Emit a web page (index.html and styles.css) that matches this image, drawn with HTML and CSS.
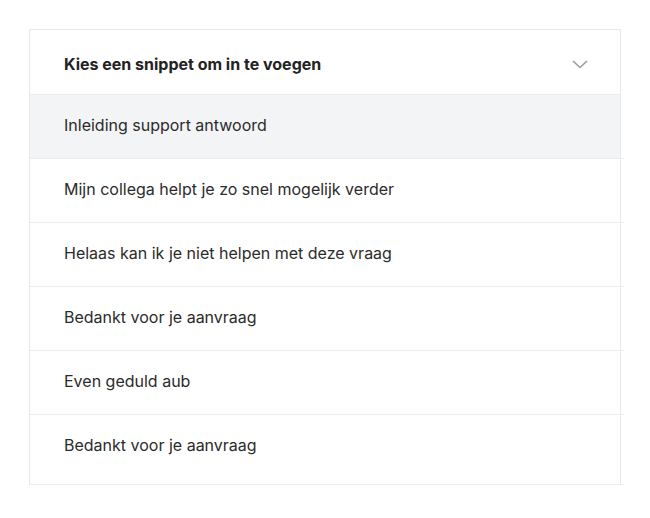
FILE: index.html
```html
<!DOCTYPE html>
<html>
<head>
<meta charset="utf-8">
<link rel="stylesheet" href="styles.css">
</head>
<body>
<div class="card">
  <div class="header">
    <span class="title">Kies een snippet om in te voegen</span>
    <svg class="chevron" width="16" height="9" viewBox="0 0 16 9"><path d="M1 1 L8 7.5 L15 1" fill="none" stroke="#9a9a9a" stroke-width="1.6"/></svg>
  </div>
  <ul class="list">
    <li class="item active">Inleiding support antwoord</li>
    <li class="item">Mijn collega helpt je zo snel mogelijk verder</li>
    <li class="item">Helaas kan ik je niet helpen met deze vraag</li>
    <li class="item">Bedankt voor je aanvraag</li>
    <li class="item">Even geduld aub</li>
    <li class="item last">Bedankt voor je aanvraag</li>
  </ul>
</div>
</body>
</html>
```
FILE: styles.css
```css
html, body {
  margin: 0;
  background: #ffffff;
}
body {
  padding: 29px;
  font-family: Inter, "Noto Sans", sans-serif;
}
.card {
  width: 590px;
  border: 1px solid #e8e8ea;
  border-bottom: none;
}
.header {
  box-sizing: border-box;
  height: 65px;
  display: flex;
  align-items: flex-start;
  justify-content: space-between;
  padding: 22px 32px 0 34px;
  border-bottom: 1px solid #ececee;
}
.title {
  font-size: 16px;
  line-height: 24px;
  font-weight: 700;
  color: #222222;
}
.chevron {
  display: block;
  margin-top: 8px;
}
.list {
  list-style: none;
  margin: 0;
  padding: 0;
}
.item {
  box-sizing: border-box;
  height: 64px;
  padding: 18px 0 0 34px;
  margin-right: -4px;
  border-bottom: 1px solid #ececee;
  font-size: 16px;
  line-height: 24px;
  color: #2b2b2b;
}
.item.active {
  background: linear-gradient(#f3f4f6, #f3f4f6) no-repeat;
  background-size: calc(100% - 4px) 100%;
}
.item.last {
  height: 70px;
}
```
